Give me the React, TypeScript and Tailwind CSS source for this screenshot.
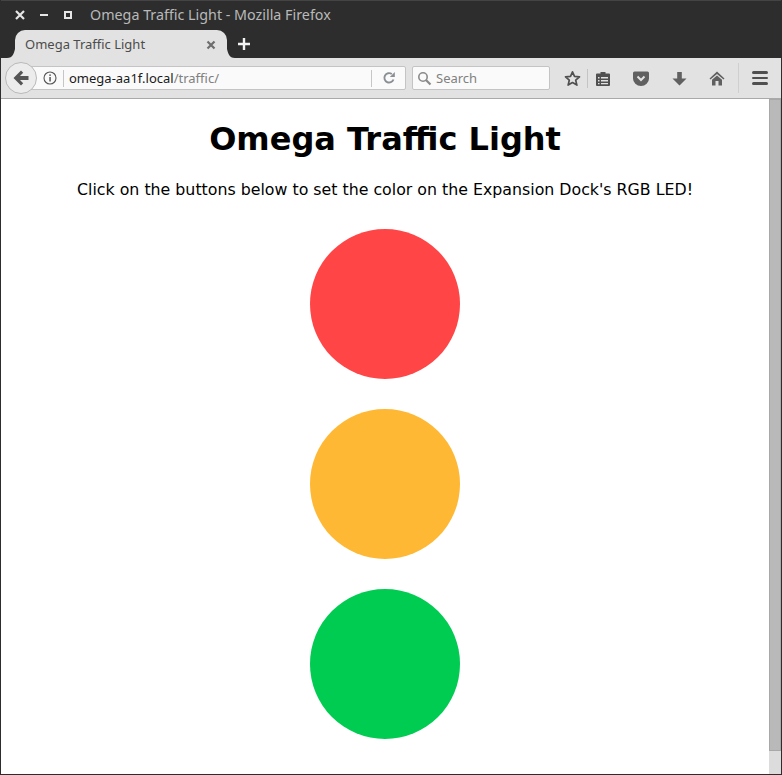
import { type ReactNode } from "react";

const uiFont = "font-['Noto_Sans','Open_Sans',sans-serif]";

function WindowButtons() {
  return (
    <div className="flex items-center">
      <svg width="12" height="12" viewBox="0 0 12 12" className="ml-[13px]">
        <path d="M2 2l8 8M10 2l-8 8" stroke="#e6e6e6" strokeWidth="2.2" />
      </svg>
      <div className="ml-[14px] h-[2px] w-[8px] bg-[#e6e6e6]" />
      <div className="ml-[16px] h-[8px] w-[8px] border-2 border-[#e6e6e6]" />
    </div>
  );
}

function TabFlare({ side }: { side: "left" | "right" }) {
  return (
    <svg
      width="12"
      height="14"
      viewBox="0 0 12 14"
      className={side === "left" ? "absolute bottom-0 left-[-8px]" : "absolute bottom-0 right-[-8px] -scale-x-100"}
    >
      <path d="M12 0v14H0c6 0 7-5 8-9 .6-2.500 2-5 4-5z" fill="#e2e2e2" />
    </svg>
  );
}

function ToolIcon({ className, children }: { className: string; children: ReactNode }) {
  return <div className={`flex shrink-0 items-center justify-center ${className}`}>{children}</div>;
}

function NavBar() {
  return (
    <div className={`relative flex h-[41px] shrink-0 items-center border-b border-[#a9a9a9] bg-[#e2e2e2] ${uiFont}`}>
      {/* back button sits over the url bar */}
      <div className="absolute left-[4px] top-[4px] z-10 flex h-[32px] w-[32px] items-center justify-center rounded-full border border-[#b9b9b9] bg-[#ececec]">
        <svg width="16" height="16" viewBox="0 0 16 16">
          <path d="M8 .5L.5 8 8 15.500l2.200-2.200L7 10h8.500V6H7l3.200-3.300z" fill="#555" />
        </svg>
      </div>

      <div className="ml-[29px] flex h-[24px] w-[376px] items-center rounded-r-[2px] border border-[#c4c4c4] bg-[#fafafa] text-[13px]">
        <svg width="14" height="14" viewBox="0 0 14 14" className="ml-[12px]">
          <circle cx="7" cy="7" r="6" fill="none" stroke="#555" strokeWidth="1.100" />
          <rect x="6.300" y="6" width="1.500" height="4.500" fill="#555" />
          <rect x="6.300" y="3.400" width="1.500" height="1.500" fill="#555" />
        </svg>
        <div className="ml-[6px] h-[17px] w-px bg-[#c6c6c6]" />
        <span className="ml-[5px] pt-[1px] text-[#1a1a1a]">omega-aa1f.local</span>
        <span className="pt-[1px] text-[#808080]">/traffic/</span>
        <div className="ml-auto h-[17px] w-px bg-[#c6c6c6]" />
        <svg width="14" height="14" viewBox="0 0 14 14" className="ml-[10px] mr-[9px]">
          <path d="M11.500 8.500A4.700 4.700 0 1 1 9.800 3" fill="none" stroke="#8a8f94" strokeWidth="1.900" />
          <path d="M7.800 6h5V1z" fill="#8a8f94" />
        </svg>
      </div>

      <div className="ml-[6px] flex h-[24px] w-[138px] items-center rounded-[2px] border border-[#c4c4c4] bg-[#fafafa] text-[13px] text-[#808080]">
        <svg width="15" height="15" viewBox="0 0 15 15" className="ml-[4px]">
          <circle cx="6" cy="6" r="4.200" fill="none" stroke="#8a8a8a" strokeWidth="1.600" />
          <path d="M9 9l4.500 4.500" stroke="#8a8a8a" strokeWidth="2.200" />
        </svg>
        <span className="ml-[4px] pt-[1px]">Search</span>
      </div>

      <ToolIcon className="ml-[12px] w-[20px]">
        <svg width="17" height="17" viewBox="0 0 17 17">
          <path
            d="M8.500 1.800l2 4.600 5 .5-3.800 3.300 1.200 4.900-4.400-2.600-4.400 2.600 1.200-4.900L1.500 6.900l5-.5z"
            fill="none"
            stroke="#505050"
            strokeWidth="1.700"
            strokeLinejoin="round"
          />
        </svg>
      </ToolIcon>
      <div className="ml-[5px] h-[19px] w-px bg-[#c4c4c4]" />
      <ToolIcon className="ml-[5px] w-[20px]">
        <svg width="14" height="15" viewBox="0 0 14 15">
          <path d="M1 2.500H4.500V1h5v1.500H13a1 1 0 0 1 1 1V14a1 1 0 0 1-1 1H1a1 1 0 0 1-1-1V3.500a1 1 0 0 1 1-1z" fill="#505050" />
          <path d="M2 6h1.500v1.500H2zM5 6h7v1.500H5zM2 9h1.500v1.500H2zM5 9h7v1.500H5zM2 12h1.500v1.200H2zM5 12h7v1.200H5z" fill="#e2e2e2" />
        </svg>
      </ToolIcon>
      <ToolIcon className="ml-[18px] w-[20px]">
        <svg width="16" height="15" viewBox="0 0 16 15">
          <path d="M1.500 0.500h13A1.500 1.500 0 0 1 16 2v5.500a8 7.500 0 0 1-16 0V2A1.500 1.500 0 0 1 1.500.5z" fill="#606060" />
          <path d="M4.500 5.500L8 9l3.500-3.500" fill="none" stroke="#e2e2e2" strokeWidth="2" />
        </svg>
      </ToolIcon>
      <ToolIcon className="ml-[18px] w-[20px]">
        <svg width="15" height="15" viewBox="0 0 15 15">
          <path d="M5.200 1h4.600v6.500h4.700L7.500 14.500.5 7.500h4.700z" fill="#606060" />
        </svg>
      </ToolIcon>
      <ToolIcon className="ml-[18px] w-[20px]">
        <svg width="16" height="15" viewBox="0 0 16 15">
          <path d="M8 .5L.5 7.500 1.500 8.500 8 3l6.500 5.500 1-1z" fill="#606060" />
          <path d="M8 4.500L3 8.700V14.500h3.500V10h3v4.500H13V8.700z" fill="#606060" />
        </svg>
      </ToolIcon>
      <div className="ml-[11px] h-[30px] w-px bg-[#cfcfcf]" />
      <ToolIcon className="ml-[11px] w-[20px]">
        <div className="flex w-[16px] flex-col gap-[3px]">
          <div className="h-[2.500px] rounded-full bg-[#505050]" />
          <div className="h-[2.500px] rounded-full bg-[#505050]" />
          <div className="h-[2.500px] rounded-full bg-[#505050]" />
        </div>
      </ToolIcon>
    </div>
  );
}

export default function App() {
  return (
    <div className="flex h-[775px] w-[782px] flex-col overflow-hidden border-x border-b border-[#2d2d2d] bg-white">
      <div className={`flex h-[31px] shrink-0 items-center border-t border-[#444] bg-[#2d2d2d] pb-[2px] ${uiFont}`}>
        <WindowButtons />
        <span className="ml-[18px] text-[14.3px] text-[#b9b9b9]">Omega Traffic Light - Mozilla Firefox</span>
      </div>

      <div className={`flex h-[27px] shrink-0 items-end bg-[#2d2d2d] ${uiFont}`}>
        <div className="relative ml-[14px] flex h-[28px] w-[212px] items-center rounded-t-[10px] bg-[#e2e2e2] pl-[10px] pr-[11px] pt-[1px] text-[13px] text-[#4c4c4c]">
          <TabFlare side="left" />
          <TabFlare side="right" />
          Omega Traffic Light
          <svg width="10" height="10" viewBox="0 0 10 10" className="ml-auto">
            <path d="M1.500 1.500l7 7M8.500 1.500l-7 7" stroke="#6e6e6e" strokeWidth="2.200" />
          </svg>
        </div>
        <svg width="14" height="14" viewBox="0 0 14 14" className="mb-[7px] ml-[10px]">
          <path d="M7 1v12M1 7h12" stroke="#f2f2f2" strokeWidth="2.400" />
        </svg>
      </div>

      <NavBar />

      <div className="flex min-h-0 flex-1">
        <main className="flex min-w-0 flex-1 flex-col items-center font-['DejaVu_Sans',sans-serif] text-black">
          <h1 className="mt-[21px] text-[32px] leading-[38px] font-bold">Omega Traffic Light</h1>
          <p className="mt-[22px] text-[15.8px] leading-[19px]">
            Click on the buttons below to set the color on the Expansion Dock's RGB LED!
          </p>
          <div className="mt-[30px] flex flex-col gap-[30px]">
            <button className="h-[150px] w-[150px] rounded-full bg-[#ff4545]" />
            <button className="h-[150px] w-[150px] rounded-full bg-[#ffb833]" />
            <button className="h-[150px] w-[150px] rounded-full bg-[#00cc52]" />
          </div>
        </main>
        <div className="flex w-[12px] shrink-0 flex-col bg-[#dcdcdc]">
          <div className="h-[652px] border border-[#a8a8a8] bg-[#b9b9b9]" />
        </div>
      </div>
    </div>
  );
}
